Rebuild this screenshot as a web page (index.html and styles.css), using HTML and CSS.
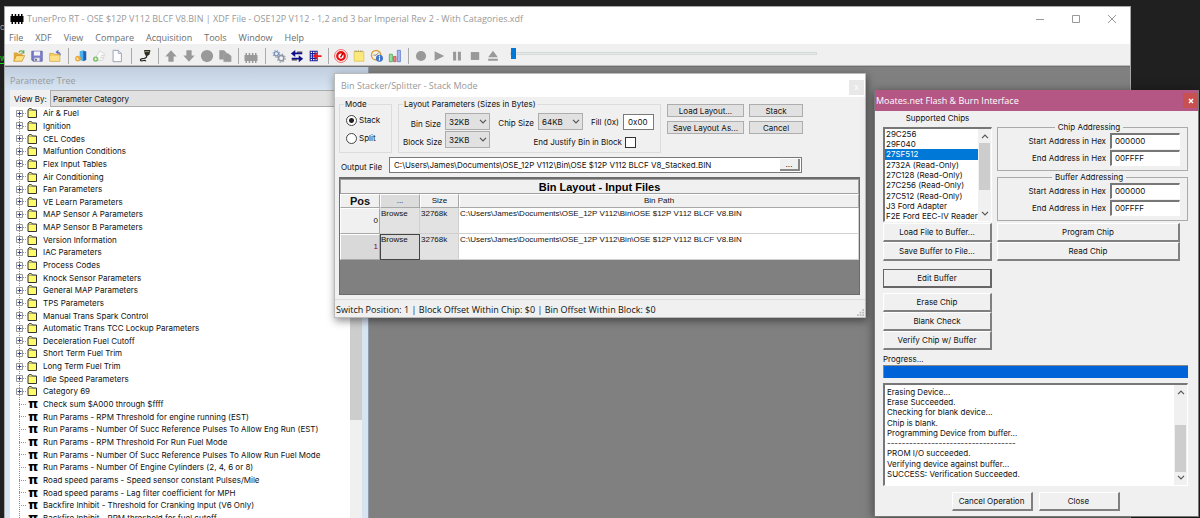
FILE: index.html
```html
<!DOCTYPE html>
<html lang="en">
<head>
<meta charset="utf-8">
<title>TunerPro RT</title>
<link rel="stylesheet" href="styles.css">
</head>
<body>
<svg class="defs" aria-hidden="true">
  <symbol id="folder" viewBox="0 0 10 10"><path d="M1 9.500V2L2 .7H4.500L5.500 2H9.500V9.500Z" fill="#fffb6b" stroke="#333" stroke-width="1"/><path d="M1 2.500H9" stroke="#777" stroke-width=".6"/></symbol>
  <symbol id="plus" viewBox="0 0 7 7"><path d="M.5.500H6.500V6.500H.5Z" fill="#fff" stroke="#999"/><path d="M1.500 3.500H5.500M3.500 1.500V5.500" stroke="#33478f"/></symbol>
  <symbol id="chev" viewBox="0 0 8 5"><path d="M1 .8L4 3.800L7 .8" fill="none" stroke="#555" stroke-width="1.200"/></symbol>
  <symbol id="chip" viewBox="0 0 14 10"><path d="M.5 2H13.500V8H.5ZM1.500 0H3V10H1.500ZM4.700 0H6.200V10H4.700ZM7.900 0H9.400V10H7.900ZM11 0H12.500V10H11Z"/></symbol>
</svg>
<div class="desktop">
  <div class="behind"><span class="behind-red">c</span><span class="behind-green">w</span></div>

  <main class="app">
    <header class="titlebar">
      <svg class="app-icon" viewBox="0 0 14 10"><use href="#chip"/></svg>
      <h1>TunerPro RT - OSE $12P V112 BLCF V8.BIN | XDF File - OSE12P V112 - 1,2 and 3 bar Imperial Rev 2 - With Catagories.xdf</h1>
      <div class="winctl">
        <button aria-label="Minimize"><svg viewBox="0 0 10 10"><path d="M1 5.500H9"/></svg></button>
        <button aria-label="Maximize"><svg viewBox="0 0 10 10"><path d="M1.500 1.500H8.500V8.500H1.500Z"/></svg></button>
        <button aria-label="Close"><svg viewBox="0 0 10 10"><path d="M1 1L9 9M9 1L1 9"/></svg></button>
      </div>
    </header>
    <nav class="menubar">
      <button>File</button><button>XDF</button><button>View</button><button>Compare</button><button>Acquisition</button><button>Tools</button><button>Window</button><button>Help</button>
    </nav>
    <div class="toolbar" role="toolbar">
      <button aria-label="Open"><svg viewBox="0 0 16 16"><path d="M2 14V4H6L7 5H12V8" fill="#e0a93c"/><path d="M2 14L5 7.500H14.500L11.500 14Z" fill="#fbe084" stroke="#c98a22" stroke-width=".8"/><path d="M8 4C9 1.500 12 1.500 13 3.500M13.500 1.500V4.500H10.500" fill="none" stroke="#58a548" stroke-width="1.200"/></svg></button>
      <button aria-label="Save"><svg viewBox="0 0 16 16"><path d="M2 2.500H14V14H3.500L2 12.500Z" fill="#7d80c8" stroke="#5558a0" stroke-width=".8"/><path d="M4.500 2.800H11.500V7.500H4.500Z" fill="#f4f4fa"/><path d="M5 10H11V14H5Z" fill="#e5e5ee"/><path d="M6 11H7.700V13.500H6Z" fill="#555"/></svg></button>
      <button aria-label="Close file"><svg viewBox="0 0 16 16"><path d="M2 5H6L7 6H13.500V14H2Z" fill="#f6ce66" stroke="#d09a30" stroke-width=".8"/><path d="M2.500 8H13V13.500H2.500Z" fill="#fbe08a"/><path d="M14 7C14 4 12.500 3.500 10 3.500M12 1.500L9.500 3.500L12 5.500" fill="none" stroke="#5868c0" stroke-width="1.200"/></svg></button>
      <i class="sep"></i>
      <button aria-label="Edit definition"><svg viewBox="0 0 16 16"><path d="M6.500 2.500L11 1.500V14L6.500 12.500Z" fill="#49b2ea"/><path d="M10.500 2L14 2.800V12.500L10.500 14Z" fill="#1c62b8"/><circle cx="4.500" cy="11" r="3.200" fill="#f2a838"/><path d="M3 10L5 12.500" stroke="#fff" stroke-width="1.200"/></svg></button>
      <button aria-label="New definition"><svg viewBox="0 0 16 16"><path d="M5 8L9 2L14.500 6L12 13H7Z" fill="#fafafa" stroke="#ccc" stroke-width=".8"/><path d="M10 8L14 7M9 10L13 10" stroke="#d0d0d0"/><circle cx="4.200" cy="11.500" r="3" fill="#6fbf58"/><path d="M2.500 11.500H6M4.200 9.800V13.200" stroke="#fff"/></svg></button>
      <button aria-label="New document"><svg viewBox="0 0 16 16"><path d="M3.500 1.500H9.500L13 5V14.500H3.500Z" fill="#fdfdff" stroke="#8f98aa"/><path d="M9.500 1.500V5H13" fill="#dfe4ee" stroke="#8f98aa" stroke-width=".8"/></svg></button>
      <i class="sep wide"></i>
      <button aria-label="Connect"><svg viewBox="0 0 16 16"><path d="M7 1H14V2.500L13 6.500L10.500 8H9L7.500 5Z" fill="#2b2b20"/><path d="M8 3H13" stroke="#c7c29c" stroke-width=".8"/><path d="M10 8C10 11 8 10.500 5 11C1.500 11.500 2.500 14 5 13.500C7 13 8 12 9 14" fill="none" stroke="#26261e" stroke-width="1.300"/></svg></button>
      <i class="sep"></i>
      <button aria-label="Upload" disabled><svg viewBox="0 0 16 16"><path d="M8 1.500L14.500 8.500H11V14.500H5V8.500H1.500Z"/></svg></button>
      <button aria-label="Download" disabled><svg viewBox="0 0 16 16"><path d="M8 14.500L14.500 7.500H11V1.500H5V7.500H1.500Z"/></svg></button>
      <button aria-label="Verify" disabled><svg viewBox="0 0 16 16"><circle cx="8" cy="8" r="7"/></svg></button>
      <button aria-label="Copy" disabled><svg viewBox="0 0 16 16"><path d="M1.500 1.500H7L10 4.500V12H1.500Z"/><path d="M6.500 5H11.500L15 8V14.500H6.500Z" stroke="#aaa" stroke-width=".6"/></svg></button>
      <i class="sep"></i>
      <button aria-label="Chip" disabled><svg viewBox="0 0 14 14"><g transform="translate(0 2)"><use href="#chip"/></g></svg></button>
      <i class="sep wide"></i>
      <button aria-label="Settings"><svg viewBox="0 0 16 16" fill="none"><circle cx="5" cy="5.500" r="2.400" stroke="#7b93bd" stroke-width="1.500"/><circle cx="5" cy="5.500" r="3.800" stroke="#8ea3c8" stroke-width="1.200" stroke-dasharray="1.500 1.500"/><circle cx="10.500" cy="10.500" r="3" stroke="#8d94a4" stroke-width="1.700"/><circle cx="10.500" cy="10.500" r="4.600" stroke="#9aa0ae" stroke-width="1.300" stroke-dasharray="1.800 1.800"/></svg></button>
      <button aria-label="Compare"><svg viewBox="0 0 16 16"><path d="M1 5L6 1V4H14V6H6V9Z" fill="#10108c"/><path d="M15 11L10 7V10H2V12H10V15Z" fill="#10108c"/><path d="M8 3.500H14M2 12.500H8" stroke="#111"/></svg></button>
      <button aria-label="Difference"><svg viewBox="0 0 16 16"><path d="M2 2H10.500V14H2Z" fill="#fff"/><path d="M2.500 2V14M5.200 2V14M8 2V14M10.500 2V14M2 2.500H11M2 5.300H11M2 8H11M2 10.700H11M2 13.500H11" stroke="#20209a" stroke-width="1.200"/><path d="M6 8L10 4V7H15.500V9H10V12Z" fill="#f01818"/></svg></button>
      <i class="sep"></i>
      <button aria-label="Gauge"><svg viewBox="0 0 16 16"><circle cx="8" cy="8" r="7.300" fill="#fff" stroke="#f04a4a" stroke-width="1"/><circle cx="8" cy="8" r="4.300" fill="#fff" stroke="#e81010" stroke-width="2.600"/><path d="M7.500 9.500L10.500 4.500" stroke="#c00" stroke-width="1.800"/></svg></button>
      <button aria-label="Notes"><svg viewBox="0 0 16 16"><path d="M2.500 3H13.500V14H2.500Z" fill="#fbe97c" stroke="#dcc04e" stroke-width=".8"/><path d="M3 2.500H13" stroke="#9a8d4e" stroke-width="1.600" stroke-dasharray="1 1"/></svg></button>
      <button aria-label="Info"><svg viewBox="0 0 16 16"><circle cx="7" cy="7" r="5.300" fill="#f8f3e6" stroke="#d8a040" stroke-width="1.600"/><path d="M7 7L10 4M4 7H7" stroke="#777"/><circle cx="10.800" cy="10.500" r="4" fill="#3f74c8"/><path d="M10.800 7.800V9M10.800 9.700V13" stroke="#fff" stroke-width="1.300"/></svg></button>
      <button aria-label="Histogram"><svg viewBox="0 0 16 16"><path d="M1.500 6H5V14.500H1.500Z" fill="#9be0a0" stroke="#3f9c48" stroke-width=".8"/><path d="M6.300 8.500H9.200V14.500H6.300Z" fill="#f08080" stroke="#c04848" stroke-width=".8"/><path d="M10.700 1.500H14.200V14.500H10.700Z" fill="#a4b8f4" stroke="#5070c8" stroke-width=".8"/></svg></button>
      <i class="sep"></i>
      <button aria-label="Record" disabled><svg viewBox="0 0 16 16"><circle cx="8" cy="8" r="5.800"/></svg></button>
      <button aria-label="Play" disabled><svg viewBox="0 0 16 16"><path d="M3 2.500V13.500L14 8Z"/></svg></button>
      <button aria-label="Pause" disabled><svg viewBox="0 0 16 16"><path d="M3.500 3H7V13H3.500ZM9 3H12.500V13H9Z"/></svg></button>
      <button aria-label="Stop" disabled><svg viewBox="0 0 16 16"><path d="M3.200 3.500H12.800V12.500H3.200Z"/></svg></button>
      <button aria-label="Eject" disabled><svg viewBox="0 0 16 16"><path d="M8 2L13.500 9.500H2.500ZM2.500 11H13.500V13.500H2.500Z"/></svg></button>
      <input class="seek" type="range" min="0" max="100" value="0" aria-label="Playback position">
    </div>

    <div class="client">
      <section class="tree-panel">
        <h2>Parameter Tree</h2>
        <div class="viewby"><label for="viewby">View By:</label><select id="viewby"><option>Parameter Category</option></select></div>
        <div class="tree-body">
          <ul class="tree">
            <li><svg class="plus"><use href="#plus"/></svg><svg class="folder"><use href="#folder"/></svg>Air &amp; Fuel</li>
            <li><svg class="plus"><use href="#plus"/></svg><svg class="folder"><use href="#folder"/></svg>Ignition</li>
            <li><svg class="plus"><use href="#plus"/></svg><svg class="folder"><use href="#folder"/></svg>CEL Codes</li>
            <li><svg class="plus"><use href="#plus"/></svg><svg class="folder"><use href="#folder"/></svg>Malfuntion Conditions</li>
            <li><svg class="plus"><use href="#plus"/></svg><svg class="folder"><use href="#folder"/></svg>Flex Input Tables</li>
            <li><svg class="plus"><use href="#plus"/></svg><svg class="folder"><use href="#folder"/></svg>Air Conditioning</li>
            <li><svg class="plus"><use href="#plus"/></svg><svg class="folder"><use href="#folder"/></svg>Fan Parameters</li>
            <li><svg class="plus"><use href="#plus"/></svg><svg class="folder"><use href="#folder"/></svg>VE Learn Parameters</li>
            <li><svg class="plus"><use href="#plus"/></svg><svg class="folder"><use href="#folder"/></svg>MAP Sensor A Parameters</li>
            <li><svg class="plus"><use href="#plus"/></svg><svg class="folder"><use href="#folder"/></svg>MAP Sensor B Parameters</li>
            <li><svg class="plus"><use href="#plus"/></svg><svg class="folder"><use href="#folder"/></svg>Version Information</li>
            <li><svg class="plus"><use href="#plus"/></svg><svg class="folder"><use href="#folder"/></svg>IAC Parameters</li>
            <li><svg class="plus"><use href="#plus"/></svg><svg class="folder"><use href="#folder"/></svg>Process Codes</li>
            <li><svg class="plus"><use href="#plus"/></svg><svg class="folder"><use href="#folder"/></svg>Knock Sensor Parameters</li>
            <li><svg class="plus"><use href="#plus"/></svg><svg class="folder"><use href="#folder"/></svg>General MAP Parameters</li>
            <li><svg class="plus"><use href="#plus"/></svg><svg class="folder"><use href="#folder"/></svg>TPS Parameters</li>
            <li><svg class="plus"><use href="#plus"/></svg><svg class="folder"><use href="#folder"/></svg>Manual Trans Spark Control</li>
            <li><svg class="plus"><use href="#plus"/></svg><svg class="folder"><use href="#folder"/></svg>Automatic Trans TCC Lockup Parameters</li>
            <li><svg class="plus"><use href="#plus"/></svg><svg class="folder"><use href="#folder"/></svg>Deceleration Fuel Cutoff</li>
            <li><svg class="plus"><use href="#plus"/></svg><svg class="folder"><use href="#folder"/></svg>Short Term Fuel Trim</li>
            <li><svg class="plus"><use href="#plus"/></svg><svg class="folder"><use href="#folder"/></svg>Long Term Fuel Trim</li>
            <li><svg class="plus"><use href="#plus"/></svg><svg class="folder"><use href="#folder"/></svg>Idle Speed Parameters</li>
            <li><svg class="plus"><use href="#plus"/></svg><svg class="folder"><use href="#folder"/></svg>Category 69</li>
            <li class="leaf"><b>π</b>Check sum $A000 through $ffff</li>
            <li class="leaf"><b>π</b>Run Params - RPM Threshold for engine running (EST)</li>
            <li class="leaf"><b>π</b>Run Params - Number Of Succ Reference Pulses To Allow Eng Run (EST)</li>
            <li class="leaf"><b>π</b>Run Params - RPM Threshold For Run Fuel Mode</li>
            <li class="leaf"><b>π</b>Run Params - Number Of Succ Reference Pulses To Allow Run Fuel Mode</li>
            <li class="leaf"><b>π</b>Run Params - Number Of Engine Cylinders (2, 4, 6 or 8)</li>
            <li class="leaf"><b>π</b>Road speed params - Speed sensor constant Pulses/Mile</li>
            <li class="leaf"><b>π</b>Road speed params - Lag filter coefficient for MPH</li>
            <li class="leaf"><b>π</b>Backfire Inhibit - Threshold for Cranking Input (V6 Only)</li>
            <li class="leaf"><b>π</b>Backfire Inhibit - RPM threshold for fuel cutoff</li>
          </ul>
          <div class="tree-scroll"><i></i></div>
        </div>
      </section>
    </div>
  </main>

  <section class="stacker" role="dialog" aria-labelledby="stacker-title">
    <header><h2 id="stacker-title">Bin Stacker/Splitter - Stack Mode</h2><button class="ghost-close" aria-label="Close">x</button></header>
    <div class="stacker-body">
      <div class="options">
        <fieldset class="mode">
          <legend>Mode</legend>
          <label><input type="radio" name="mode" checked>Stack</label>
          <label><input type="radio" name="mode">Split</label>
        </fieldset>
        <fieldset class="layout">
          <legend>Layout Parameters (Sizes in Bytes)</legend>
          <div class="line">
            <label class="first" for="binsize">Bin Size</label>
            <span class="drop"><select id="binsize"><option>32KB</option></select><svg><use href="#chev"/></svg></span>
            <label class="chip-label" for="chipsize">Chip Size</label>
            <span class="drop"><select id="chipsize"><option>64KB</option></select><svg><use href="#chev"/></svg></span>
            <label class="fill-label" for="fill">Fill (0x)</label>
            <input id="fill" class="fill" type="text" value="0x00">
          </div>
          <div class="line">
            <label class="first" for="blocksize">Block Size</label>
            <span class="drop"><select id="blocksize"><option>32KB</option></select><svg><use href="#chev"/></svg></span>
            <label class="justify">End Justify Bin in Block<input type="checkbox"></label>
          </div>
        </fieldset>
        <div class="actions">
          <button>Load Layout...</button><button>Stack</button>
          <button>Save Layout As...</button><button>Cancel</button>
        </div>
      </div>
      <div class="output">
        <label for="outfile">Output File</label>
        <div class="path"><input id="outfile" type="text" value="C:\Users\James\Documents\OSE_12P V112\Bin\OSE $12P V112 BLCF V8_Stacked.BIN"><button aria-label="Browse output file">...</button></div>
      </div>
      <div class="gridbox">
        <table>
          <caption>Bin Layout - Input Files</caption>
          <colgroup><col class="c-pos"><col class="c-browse"><col class="c-size"><col></colgroup>
          <thead><tr><th class="pos">Pos</th><th class="pressed">...</th><th>Size</th><th>Bin Path</th></tr></thead>
          <tbody>
            <tr><th>0</th><td class="btn">Browse</td><td class="size">32768k</td><td>C:\Users\James\Documents\OSE_12P V112\Bin\OSE $12P V112 BLCF V8.BIN</td></tr>
            <tr class="current"><th>1</th><td class="btn">Browse</td><td class="size">32768k</td><td>C:\Users\James\Documents\OSE_12P V112\Bin\OSE $12P V112 BLCF V8.BIN</td></tr>
          </tbody>
        </table>
      </div>
    </div>
    <footer><span>Switch Position: 1 | Block Offset Within Chip: $0 | Bin Offset Within Block: $0</span>
      <svg class="grip" viewBox="0 0 8 8"><path d="M6 0H8V2H6ZM3 3H5V5H3ZM6 3H8V5H6ZM0 6H2V8H0ZM3 6H5V8H3ZM6 6H8V8H6Z" fill="#bbb"/></svg></footer>
  </section>

  <section class="burner" role="dialog" aria-labelledby="burner-title">
    <header><h2 id="burner-title">Moates.net Flash &amp; Burn Interface</h2><button class="red-close" aria-label="Close"><svg viewBox="0 0 6 6"><path d="M1 1L5 5M5 1L1 5" stroke="#fff" stroke-width="1.400"/></svg></button></header>
    <div class="burner-body">
      <div class="columns">
        <div class="left">
          <label class="chips-label" for="chips">Supported Chips</label>
          <div class="listbox">
            <select id="chips" size="9">
              <option>29C256</option><option>29F040</option><option selected>27SF512</option><option>2732A (Read-Only)</option><option>27C128 (Read-Only)</option><option>27C256 (Read-Only)</option><option>27C512 (Read-Only)</option><option>J3 Ford Adapter</option><option>F2E Ford EEC-IV Reader</option>
            </select>
            <div class="scroll"><svg><use href="#chev"/></svg><i></i><svg class="down"><use href="#chev"/></svg></div>
          </div>
          <button>Load File to Buffer...</button>
          <button>Save Buffer to File...</button>
          <button class="default">Edit Buffer</button>
          <button>Erase Chip</button>
          <button>Blank Check</button>
          <button>Verify Chip w/ Buffer</button>
        </div>
        <div class="right">
          <fieldset><legend>Chip Addressing</legend>
            <label>Start Address in Hex<input type="text" value="000000"></label>
            <label>End Address in Hex<input type="text" value="00FFFF"></label>
          </fieldset>
          <fieldset><legend>Buffer Addressing</legend>
            <label>Start Address in Hex<input type="text" value="000000"></label>
            <label>End Address in Hex<input type="text" value="00FFFF"></label>
          </fieldset>
          <button>Program Chip</button>
          <button>Read Chip</button>
        </div>
      </div>
      <label class="progress-label" for="progress">Progress...</label>
      <progress id="progress" value="1" max="1"></progress>
      <div class="logbox">
        <div class="log" role="log">
          <p>Erasing Device...</p><p>Erase Succeeded.</p><p>Checking for blank device...</p><p>Chip is blank.</p><p>Programming Device from buffer...</p><p>-----------------------------------</p><p>PROM I/O succeeded.</p><p>Verifying device against buffer...</p><p>SUCCESS: Verification Succeeded.</p>
        </div>
        <div class="scroll low"><svg><use href="#chev"/></svg><i></i><svg class="down"><use href="#chev"/></svg></div>
      </div>
      <div class="closing"><button>Cancel Operation</button><button>Close</button></div>
    </div>
  </section>
</div>
</body>
</html>
```
FILE: styles.css
```css
* { box-sizing: border-box; }
body, h1, h2, p, ul, fieldset, legend { margin: 0; padding: 0; }
body { background: #202020; color: #111; font: 8px/10px Inter, "Liberation Sans", sans-serif; }
button, input, select { font: inherit; color: inherit; margin: 0; padding: 0; border: 0; border-radius: 0; background: none; }
h1, h2 { font: 9px/12px "Open Sans", sans-serif; color: #999; white-space: nowrap; }
.defs { position: absolute; width: 0; height: 0; }

.desktop { position: relative; height: 100vh; overflow: hidden; }
.behind { position: absolute; left: 0; top: 22px; display: flex; flex-direction: column; gap: 22px; }
.behind-red { color: #c99; }
.behind-green { color: #1d1; border-bottom: 1px solid #1d1; line-height: 9px; }

/* Main window, running past the bottom of the screen */
.app { position: absolute; inset: 6px 69px -6px 4px; display: flex; flex-direction: column; background: #fff; border: solid #a8a8a8; border-width: 1px 1px 0; }
.titlebar { display: flex; align-items: center; gap: 3px; height: 23px; padding: 0 0 0 5px; }
.app-icon { width: 14px; height: 10px; fill: #000; }
.winctl { display: flex; margin-left: auto; }
.winctl button { width: 36px; height: 20px; display: grid; place-items: center; }
.winctl svg { width: 10px; height: 10px; fill: none; stroke: #999; }
.menubar { display: flex; gap: 12px; height: 14px; padding: 1px 0 0 4px; font: 9px/13px "Open Sans", sans-serif; color: #6c6c6c; }
.toolbar { display: flex; align-items: center; height: 22px; padding: 2px 0 0 5px; background: #f0f0f0; border-bottom: 1px solid #bbb; }
.toolbar button { width: 18px; height: 18px; display: grid; place-items: center; flex: none; }
.toolbar svg { width: 14px; height: 14px; }
.toolbar button:disabled svg { fill: #999; }
.sep { width: 8px; height: 16px; flex: none; background: linear-gradient(#aaa, #aaa) center / 1px 100% no-repeat; }
.sep.wide { width: 10px; }
.seek { appearance: none; width: 307px; height: 14px; margin: 0 0 4px 8px; }
.seek::-webkit-slider-runnable-track { height: 3px; border: 1px solid #d3dada; background: #e8eaea; }
.seek::-webkit-slider-thumb { appearance: none; width: 5px; height: 11px; margin-top: -5px; background: #0078d7; }

.client { flex: 1; min-height: 0; display: flex; background: #808080; border-top: 1px solid #707070; }
.tree-panel { display: flex; flex-direction: column; width: 364px; padding: 0 6px 0 5px; background: linear-gradient(#c0cedf, #d7e4f2 24px); border-right: 1px solid #909aa8; }
.tree-panel h2 { height: 23px; padding-top: 8px; }
.viewby { display: flex; height: 17px; background: #f0f0f0; }
.viewby label { width: 40px; padding: 4px 0 0 4px; white-space: nowrap; }
.viewby select { appearance: none; flex: 1; padding: 0 2px; background: #e1e1e1; border: 1px solid #adadad; }
.tree-body { flex: 1; min-height: 0; display: flex; background: #fff; }
.tree { flex: 1; display: flex; flex-direction: column; list-style: none; background: repeating-linear-gradient(#888 0 1px, transparent 1px 2px) 9px 6px / 1px 100% no-repeat; }
.tree li { flex: 1; min-height: 0; display: flex; align-items: center; padding-left: 6px; line-height: 12px; white-space: nowrap; background: repeating-linear-gradient(90deg, #999 0 1px, transparent 1px 2px) 9px 6px / 8px 1px no-repeat; }
.plus { width: 7px; height: 7px; flex: none; }
.folder { width: 10px; height: 10px; margin: 0 6px 0 4px; flex: none; }
.leaf b { width: 15px; margin-left: 12px; font: bold 13px/12px "DejaVu Sans", sans-serif; color: #000; }
.tree-scroll { width: 12px; background: #f0f0f0; }
.tree-scroll i { display: block; height: 75%; background: #cdcdcd; }

/* Bin stacker dialog */
.stacker { position: absolute; left: 334px; top: 73px; width: 532px; background: #f0f0f0; border: 1px solid #bbb; box-shadow: 1px 3px 8px rgba(0, 0, 0, .45); }
.stacker header { display: flex; justify-content: space-between; align-items: center; height: 23px; padding: 0 1px 0 6px; background: #fff; }
.ghost-close { width: 15px; height: 15px; margin-top: 3px; background: #e8e8e8; color: #fff; }
.stacker-body { padding: 3px 5px 4px 4px; border-bottom: 1px solid #dcdcdc; }
.options { display: flex; gap: 6px; height: 53px; }
.stacker fieldset { border: 1px solid #dcdcdc; min-width: 0; }
.stacker legend { margin-left: 4px; padding: 0 1px; line-height: 9px; }
.mode { width: 53px; }
.mode label { display: flex; align-items: center; gap: 2px; height: 18px; padding-left: 6px; }
.mode legend + label { margin-top: 2px; }
.mode input { appearance: none; width: 11px; height: 11px; border: 1px solid #444; border-radius: 50%; background: #fff; }
.mode input:checked { background: radial-gradient(circle, #222 0 2px, #fff 3px); }
.layout { width: 263px; }
.line { display: flex; align-items: center; height: 17px; margin: 1px 6px 0 4px; white-space: nowrap; }
.layout legend + .line { margin-top: 4px; }
.first { width: 38px; text-align: right; margin-right: 4px; padding-top: 5px; }
.drop { position: relative; width: 45px; height: 17px; }
.drop select { appearance: none; width: 100%; height: 100%; padding: 0 3px; background: #e1e1e1; border: 1px solid #adadad; }
.drop svg { position: absolute; right: 3px; top: 6px; width: 8px; height: 5px; pointer-events: none; }
.chip-label { width: 48px; text-align: right; padding: 3px 4px 0 0; }
.fill-label { width: 40px; text-align: right; padding-right: 4px; }
.fill { width: 31px; height: 16px; padding-left: 4px; background: #fff; border: 1px solid #7a7a7a; }
.justify { display: flex; align-items: center; gap: 3px; margin: 5px 18px 0 auto; }
.justify input { appearance: none; width: 11px; height: 11px; border: 1px solid #333; background: #fff; }
.actions { display: grid; grid-template-columns: 77px 54px; grid-auto-rows: 13px; gap: 4px 5px; padding-top: 4px; }
.actions button { background: #e1e1e1; border: 1px solid #adadad; line-height: 10px; white-space: nowrap; }
.output { display: flex; align-items: center; margin-top: 4px; padding: 0 58px 0 2px; }
.output label { width: 48px; padding-top: 3px; }
.path { flex: 1; display: flex; height: 16px; padding: 1px; background: #fff; border: 1px solid #7a7a7a; }
.path input { flex: 1; min-width: 0; padding-left: 3px; }
.path button { width: 20px; background: #f0f0f0; border: solid #888; border-width: 0 2px 2px 0; }
.gridbox { height: 118px; margin-top: 4px; background: #808080; border: solid #6c6c6c; border-width: 2px 1px 1px 1px; font: 8px/10px "Liberation Sans", sans-serif; }
table { width: 100%; table-layout: fixed; border-collapse: separate; border-spacing: 0; }
caption { height: 15px; background: #f0f0f0; border: 1px solid #a0a0a0; font: bold 11px/14px "Liberation Sans", sans-serif; color: #000; }
.c-pos, .c-browse { width: 40px; }
.c-size { width: 39px; }
th, td { padding: 0 1px; border: solid #d0d0d0; border-width: 0 1px 1px 0; overflow: hidden; white-space: nowrap; }
th { background: #f0f0f0; border: 1px solid #a8a8a8; border-top-color: #fff; border-left-color: #fff; font-weight: normal; }
thead th { height: 14px; }
thead .pos { font: bold 11px/12px "Liberation Sans", sans-serif; }
.pressed { background: #dcdcdc; }
tbody th { height: 26px; text-align: right; padding-right: 1px; }
td { background: #fff; vertical-align: top; height: 26px; padding-top: 1px; }
td.btn, td.size { background: #e2e2e2; }
.current th { background: #d9d9d9; color: #804; }
.current td.btn { border: 1px solid #444; background: #d9d9d9; padding: 0; }
.stacker footer { position: relative; display: flex; align-items: center; height: 17px; padding: 2px 1px 0; font: 9px/12px "Open Sans", sans-serif; }
.grip { position: absolute; right: 1px; bottom: 1px; width: 7px; height: 7px; }

/* Flash and burn dialog */
.burner { position: absolute; left: 874px; top: 90px; width: 325px; background: #f0f0f0; border: 1px solid #777; border-top: 0; box-shadow: 0 2px 10px rgba(0, 0, 0, .5); }
.burner header { display: flex; align-items: center; justify-content: space-between; height: 21px; padding-left: 1px; background: #b45785; }
.burner h2 { color: #fff; }
.red-close { width: 15px; height: 15px; background: #c75050; display: grid; place-items: center; }
.red-close svg { width: 6px; height: 6px; }
.burner-body { padding: 2px 10px 5px 8px; }
.columns { display: flex; gap: 5px; }
.left { width: 109px; display: flex; flex-direction: column; }
.chips-label { text-align: center; height: 14px; }
.burner button:not(.red-close) { height: 19px; background: #f0f0f0; border: solid; border-width: 1px 2px 2px 1px; border-color: #fff #808080 #808080 #fff; }
.burner .left .default { border-color: #666; border-width: 1px 2px 2px 1px; margin: 8px 0 5px; }
.listbox { display: flex; height: 95px; margin-bottom: 1px; background: #fff; border: solid; border-width: 2px 1px 1px 2px; border-color: #777 #fff #fff #777; }
.listbox select { flex: 1; min-width: 0; height: 92px; overflow: hidden; background: #fff; outline: 0; }
.listbox option { height: 10px; min-height: 10px; padding: 0 1px; font-size: 8px; line-height: 10px; overflow: hidden; }
.listbox option:nth-child(3n) { height: 11px; }
.listbox option:checked { background: linear-gradient(#0078d7, #0078d7); -webkit-text-fill-color: #fff; }
.scroll { width: 13px; flex: none; display: flex; flex-direction: column; align-items: center; background: #f0f0f0; }
.scroll svg { width: 8px; height: 5px; margin: 5px 0 4px; flex: none; }
.scroll svg:first-child { transform: rotate(180deg); }
.scroll i { width: 11px; height: 47px; background: #cdcdcd; }
.scroll .down { margin: auto 0 5px; }
.scroll.low i { margin-top: 26px; }
.right { flex: 1; display: flex; flex-direction: column; padding-top: 9px; }
.right fieldset { height: 49px; min-width: 0; padding-right: 7px; border: 1px solid #aaa; margin-bottom: 1px; }
.right legend { margin: 0 auto; padding: 0 3px; line-height: 10px; }
.right label { display: flex; align-items: center; justify-content: flex-end; gap: 4px; height: 17px; }
.right fieldset input { width: 70px; height: 16px; padding-left: 3px; background: #fff; border: solid; border-width: 2px 1px 1px 2px; border-color: #777 #fff #fff #777; }
.right > button { margin-right: 8px; }
.right fieldset + button { margin-top: 1px; }
.progress-label { display: block; height: 15px; padding-top: 4px; }
progress { appearance: none; display: block; width: 100%; height: 13px; border: solid #888; border-width: 1px 0 0 1px; }
progress::-webkit-progress-bar { background: #fff; }
progress::-webkit-progress-value { background: #0063d8; }
.logbox { display: flex; height: 103px; margin-top: 5px; background: #fff; border: solid; border-width: 2px 1px 1px 2px; border-color: #777 #fff #fff #777; }
.log { flex: 1; display: flex; flex-direction: column; padding: 2px 2px 6px; }
.log p { flex: 1; }
.closing { display: flex; justify-content: center; gap: 6px; margin-top: 6px; }
.closing button { width: 81px; }
```
